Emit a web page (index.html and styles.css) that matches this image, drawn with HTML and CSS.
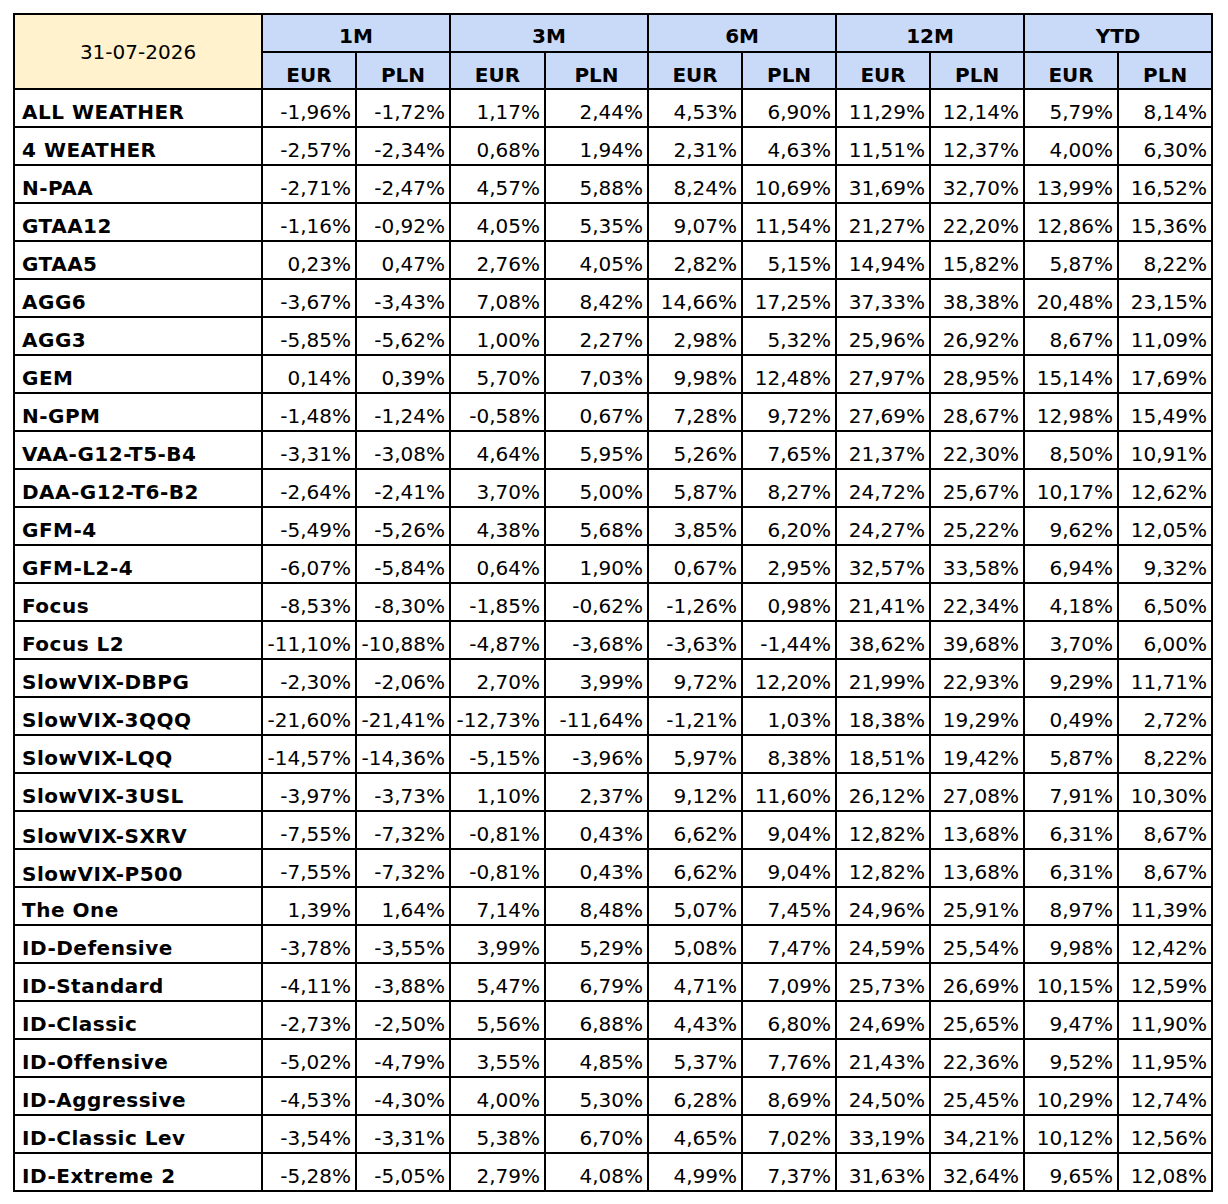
FILE: index.html
```html
<!DOCTYPE html>
<html lang="pl">
<head>
<meta charset="utf-8">
<title>Wyniki strategii</title>
<link rel="stylesheet" href="styles.css">
</head>
<body>
<table class="perf">
  <colgroup>
    <col class="c-name">
    <col class="c-n"><col class="c-n">
    <col class="c-3e"><col class="c-3p">
    <col class="c-n"><col class="c-n">
    <col class="c-n"><col class="c-n">
    <col class="c-n"><col class="c-n">
  </colgroup>
  <thead>
    <tr class="h1">
      <th class="date" rowspan="2">31-07-2026</th>
      <th class="per" colspan="2">1M</th>
      <th class="per" colspan="2">3M</th>
      <th class="per" colspan="2">6M</th>
      <th class="per" colspan="2">12M</th>
      <th class="per" colspan="2">YTD</th>
    </tr>
    <tr class="h2">
      <th class="cur">EUR</th><th class="cur">PLN</th>
      <th class="cur">EUR</th><th class="cur">PLN</th>
      <th class="cur">EUR</th><th class="cur">PLN</th>
      <th class="cur">EUR</th><th class="cur">PLN</th>
      <th class="cur">EUR</th><th class="cur">PLN</th>
    </tr>
  </thead>
  <tbody>
    <tr><td class="name">ALL WEATHER</td><td>-1,96%</td><td>-1,72%</td><td>1,17%</td><td>2,44%</td><td>4,53%</td><td>6,90%</td><td>11,29%</td><td>12,14%</td><td>5,79%</td><td>8,14%</td></tr>
    <tr><td class="name">4 WEATHER</td><td>-2,57%</td><td>-2,34%</td><td>0,68%</td><td>1,94%</td><td>2,31%</td><td>4,63%</td><td>11,51%</td><td>12,37%</td><td>4,00%</td><td>6,30%</td></tr>
    <tr><td class="name">N-PAA</td><td>-2,71%</td><td>-2,47%</td><td>4,57%</td><td>5,88%</td><td>8,24%</td><td>10,69%</td><td>31,69%</td><td>32,70%</td><td>13,99%</td><td>16,52%</td></tr>
    <tr><td class="name">GTAA12</td><td>-1,16%</td><td>-0,92%</td><td>4,05%</td><td>5,35%</td><td>9,07%</td><td>11,54%</td><td>21,27%</td><td>22,20%</td><td>12,86%</td><td>15,36%</td></tr>
    <tr><td class="name">GTAA5</td><td>0,23%</td><td>0,47%</td><td>2,76%</td><td>4,05%</td><td>2,82%</td><td>5,15%</td><td>14,94%</td><td>15,82%</td><td>5,87%</td><td>8,22%</td></tr>
    <tr><td class="name">AGG6</td><td>-3,67%</td><td>-3,43%</td><td>7,08%</td><td>8,42%</td><td>14,66%</td><td>17,25%</td><td>37,33%</td><td>38,38%</td><td>20,48%</td><td>23,15%</td></tr>
    <tr><td class="name">AGG3</td><td>-5,85%</td><td>-5,62%</td><td>1,00%</td><td>2,27%</td><td>2,98%</td><td>5,32%</td><td>25,96%</td><td>26,92%</td><td>8,67%</td><td>11,09%</td></tr>
    <tr><td class="name">GEM</td><td>0,14%</td><td>0,39%</td><td>5,70%</td><td>7,03%</td><td>9,98%</td><td>12,48%</td><td>27,97%</td><td>28,95%</td><td>15,14%</td><td>17,69%</td></tr>
    <tr><td class="name">N-GPM</td><td>-1,48%</td><td>-1,24%</td><td>-0,58%</td><td>0,67%</td><td>7,28%</td><td>9,72%</td><td>27,69%</td><td>28,67%</td><td>12,98%</td><td>15,49%</td></tr>
    <tr><td class="name">VAA-G12-T5-B4</td><td>-3,31%</td><td>-3,08%</td><td>4,64%</td><td>5,95%</td><td>5,26%</td><td>7,65%</td><td>21,37%</td><td>22,30%</td><td>8,50%</td><td>10,91%</td></tr>
    <tr><td class="name">DAA-G12-T6-B2</td><td>-2,64%</td><td>-2,41%</td><td>3,70%</td><td>5,00%</td><td>5,87%</td><td>8,27%</td><td>24,72%</td><td>25,67%</td><td>10,17%</td><td>12,62%</td></tr>
    <tr><td class="name">GFM-4</td><td>-5,49%</td><td>-5,26%</td><td>4,38%</td><td>5,68%</td><td>3,85%</td><td>6,20%</td><td>24,27%</td><td>25,22%</td><td>9,62%</td><td>12,05%</td></tr>
    <tr><td class="name">GFM-L2-4</td><td>-6,07%</td><td>-5,84%</td><td>0,64%</td><td>1,90%</td><td>0,67%</td><td>2,95%</td><td>32,57%</td><td>33,58%</td><td>6,94%</td><td>9,32%</td></tr>
    <tr><td class="name">Focus</td><td>-8,53%</td><td>-8,30%</td><td>-1,85%</td><td>-0,62%</td><td>-1,26%</td><td>0,98%</td><td>21,41%</td><td>22,34%</td><td>4,18%</td><td>6,50%</td></tr>
    <tr><td class="name">Focus L2</td><td>-11,10%</td><td>-10,88%</td><td>-4,87%</td><td>-3,68%</td><td>-3,63%</td><td>-1,44%</td><td>38,62%</td><td>39,68%</td><td>3,70%</td><td>6,00%</td></tr>
    <tr><td class="name">SlowVIX-DBPG</td><td>-2,30%</td><td>-2,06%</td><td>2,70%</td><td>3,99%</td><td>9,72%</td><td>12,20%</td><td>21,99%</td><td>22,93%</td><td>9,29%</td><td>11,71%</td></tr>
    <tr><td class="name">SlowVIX-3QQQ</td><td>-21,60%</td><td>-21,41%</td><td>-12,73%</td><td>-11,64%</td><td>-1,21%</td><td>1,03%</td><td>18,38%</td><td>19,29%</td><td>0,49%</td><td>2,72%</td></tr>
    <tr><td class="name">SlowVIX-LQQ</td><td>-14,57%</td><td>-14,36%</td><td>-5,15%</td><td>-3,96%</td><td>5,97%</td><td>8,38%</td><td>18,51%</td><td>19,42%</td><td>5,87%</td><td>8,22%</td></tr>
    <tr><td class="name">SlowVIX-3USL</td><td>-3,97%</td><td>-3,73%</td><td>1,10%</td><td>2,37%</td><td>9,12%</td><td>11,60%</td><td>26,12%</td><td>27,08%</td><td>7,91%</td><td>10,30%</td></tr>
    <tr><td class="name low">SlowVIX-SXRV</td><td>-7,55%</td><td>-7,32%</td><td>-0,81%</td><td>0,43%</td><td>6,62%</td><td>9,04%</td><td>12,82%</td><td>13,68%</td><td>6,31%</td><td>8,67%</td></tr>
    <tr><td class="name low">SlowVIX-P500</td><td>-7,55%</td><td>-7,32%</td><td>-0,81%</td><td>0,43%</td><td>6,62%</td><td>9,04%</td><td>12,82%</td><td>13,68%</td><td>6,31%</td><td>8,67%</td></tr>
    <tr><td class="name">The One</td><td>1,39%</td><td>1,64%</td><td>7,14%</td><td>8,48%</td><td>5,07%</td><td>7,45%</td><td>24,96%</td><td>25,91%</td><td>8,97%</td><td>11,39%</td></tr>
    <tr><td class="name">ID-Defensive</td><td>-3,78%</td><td>-3,55%</td><td>3,99%</td><td>5,29%</td><td>5,08%</td><td>7,47%</td><td>24,59%</td><td>25,54%</td><td>9,98%</td><td>12,42%</td></tr>
    <tr><td class="name">ID-Standard</td><td>-4,11%</td><td>-3,88%</td><td>5,47%</td><td>6,79%</td><td>4,71%</td><td>7,09%</td><td>25,73%</td><td>26,69%</td><td>10,15%</td><td>12,59%</td></tr>
    <tr><td class="name">ID-Classic</td><td>-2,73%</td><td>-2,50%</td><td>5,56%</td><td>6,88%</td><td>4,43%</td><td>6,80%</td><td>24,69%</td><td>25,65%</td><td>9,47%</td><td>11,90%</td></tr>
    <tr><td class="name">ID-Offensive</td><td>-5,02%</td><td>-4,79%</td><td>3,55%</td><td>4,85%</td><td>5,37%</td><td>7,76%</td><td>21,43%</td><td>22,36%</td><td>9,52%</td><td>11,95%</td></tr>
    <tr><td class="name">ID-Aggressive</td><td>-4,53%</td><td>-4,30%</td><td>4,00%</td><td>5,30%</td><td>6,28%</td><td>8,69%</td><td>24,50%</td><td>25,45%</td><td>10,29%</td><td>12,74%</td></tr>
    <tr><td class="name">ID-Classic Lev</td><td>-3,54%</td><td>-3,31%</td><td>5,38%</td><td>6,70%</td><td>4,65%</td><td>7,02%</td><td>33,19%</td><td>34,21%</td><td>10,12%</td><td>12,56%</td></tr>
    <tr><td class="name">ID-Extreme 2</td><td>-5,28%</td><td>-5,05%</td><td>2,79%</td><td>4,08%</td><td>4,99%</td><td>7,37%</td><td>31,63%</td><td>32,64%</td><td>9,65%</td><td>12,08%</td></tr>
  </tbody>
</table>
</body>
</html>
```

FILE: styles.css
```css
html, body {
  margin: 0;
  padding: 0;
  background: #ffffff;
}

body {
  padding: 13px 0 0 13px;
  font-family: "DejaVu Sans", "Liberation Sans", sans-serif;
  font-size: 20px;
  color: #000000;
}

.perf {
  border-collapse: collapse;
  table-layout: fixed;
  width: 1200px;
}

.c-name { width: 248px; }
.c-n { width: 94px; }
.c-3e { width: 95px; }
.c-3p { width: 103px; }

.perf th,
.perf td {
  border: 2px solid #000000;
  padding: 0 4px 2px 4px;
  line-height: 24px;
  white-space: nowrap;
  overflow: hidden;
}

.perf th {
  font-weight: 700;
  text-align: center;
  vertical-align: bottom;
  background: #c9daf8;
}

.perf .h1 th { height: 33px; padding-bottom: 3px; }
.perf .h2 th { height: 34px; padding-bottom: 1px; }

.perf th.date {
  font-weight: 400;
  background: #fff2cc;
  vertical-align: middle;
  padding: 0;
}

.perf td {
  height: 34px;
  text-align: right;
  vertical-align: bottom;
  font-weight: 400;
}

.perf td.name {
  text-align: left;
  font-weight: 700;
  padding-left: 7px;
  letter-spacing: 0.5px;
}

.perf td.name.low {
  padding-bottom: 0;
}
```
